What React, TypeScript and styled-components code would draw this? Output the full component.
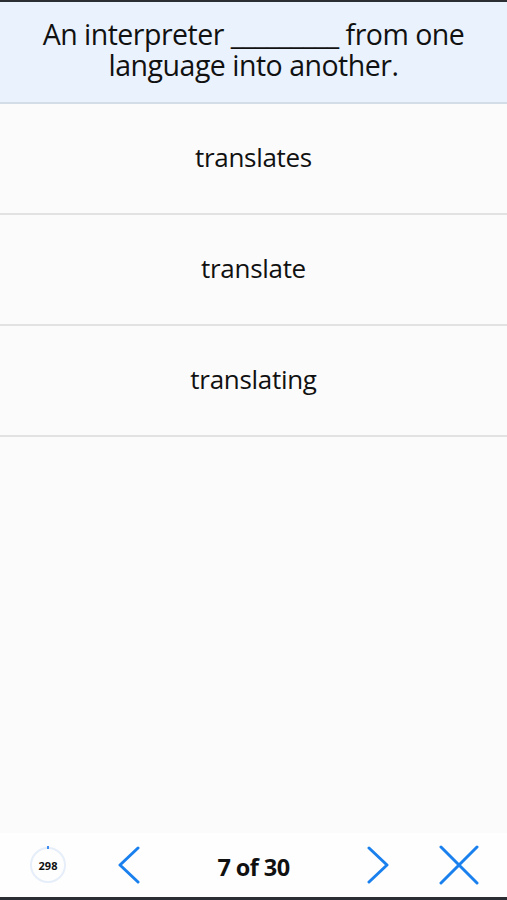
import styled, { createGlobalStyle } from 'styled-components';

const GlobalStyle = createGlobalStyle`
    html, body {
        margin: 0;
        padding: 0;
        background: #222;
    }
    * {
        box-sizing: border-box;
    }
`;

const Screen = styled.div`
    width: 507px;
    height: 900px;
    display: flex;
    flex-direction: column;
    background: #fbfbfb;
    border-top: 2px solid #2b2f33;
    border-bottom: 3px solid #2b2f33;
    font-family: 'Open Sans', 'Noto Sans', sans-serif;
    color: #111;
`;

const Question = styled.div`
    background: #eaf3fd;
    border-bottom: 2px solid #d3dde8;
    height: 102px;
    padding: 17px 14px 0;
    text-align: center;
    font-size: 28.5px;
    line-height: 31px;
    letter-spacing: -0.5px;
`;

const Options = styled.ul`
    list-style: none;
    margin: 0;
    padding: 0;
    flex: 1;
`;

const Option = styled.li`
    height: 111px;
    display: flex;
    align-items: center;
    justify-content: center;
    border-bottom: 2px solid #e2e2e2;
    font-size: 26px;
    letter-spacing: -0.3px;
    padding-bottom: 4px;
`;

const Toolbar = styled.div`
    height: 64px;
    background: #fefefe;
    display: grid;
    grid-template-columns: 96px 66px 1fr 66px 96px;
    align-items: center;
    justify-items: center;
`;

const Score = styled.div`
    position: relative;
    width: 36px;
    height: 36px;
    border-radius: 50%;
    border: 2px solid #e6eefa;
    display: flex;
    align-items: center;
    justify-content: center;
    font-size: 11px;
    font-weight: 700;

    &::after {
        content: '';
        position: absolute;
        top: -3px;
        left: 50%;
        width: 2px;
        height: 3px;
        margin-left: -1px;
        background: #3d8ef0;
    }
`;

const Counter = styled.div`
    font-size: 23.5px;
    font-weight: 700;
    letter-spacing: -0.6px;
    padding-top: 3px;
`;

const IconButton = styled.button`
    border: 0;
    background: none;
    padding: 0;
    display: flex;
    color: #1a80ee;
`;

const options = ['translates', 'translate', 'translating'];

const App = () => (
    <>
        <GlobalStyle />
        <Screen>
            <Question>An interpreter _________ from one language into another.</Question>
            <Options>
                {options.map((o) => (
                    <Option key={o}>{o}</Option>
                ))}
            </Options>
            <Toolbar>
                <Score>298</Score>
                <IconButton>
                    <svg width="24" height="38" viewBox="0 0 24 38" fill="none" stroke="currentColor" strokeWidth="3" strokeLinecap="round" strokeLinejoin="round">
                        <path d="M21 2 L3 19 L21 36" />
                    </svg>
                </IconButton>
                <Counter>7 of 30</Counter>
                <IconButton>
                    <svg width="24" height="38" viewBox="0 0 24 38" fill="none" stroke="currentColor" strokeWidth="3" strokeLinecap="round" strokeLinejoin="round">
                        <path d="M3 2 L21 19 L3 36" />
                    </svg>
                </IconButton>
                <IconButton>
                    <svg width="40" height="40" viewBox="0 0 40 40" fill="none" stroke="currentColor" strokeWidth="3" strokeLinecap="round">
                        <path d="M2 2 L38 38 M38 2 L2 38" />
                    </svg>
                </IconButton>
            </Toolbar>
        </Screen>
    </>
);

export default App;
